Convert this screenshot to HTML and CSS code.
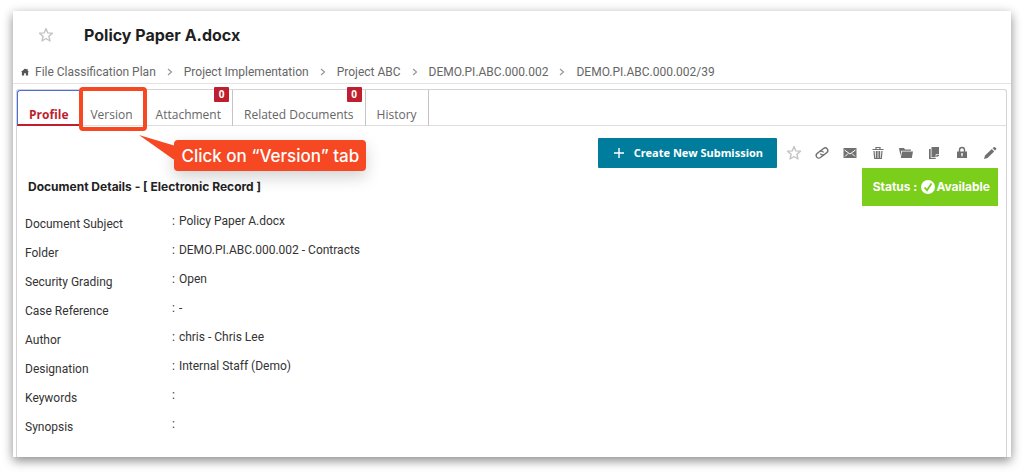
FILE: index.html
```html
<!DOCTYPE html>
<html lang="en">
<head>
<meta charset="utf-8">
<meta name="viewport" content="width=device-width, initial-scale=1">
<title>Policy Paper A.docx</title>
<link rel="stylesheet" href="styles.css">
</head>
<body>
<svg class="symbols" aria-hidden="true">
  <symbol id="star" viewBox="0 0 16 16"><path d="M8 1.600l1.800 4.300 4.700.4-3.600 3.100 1.100 4.600L8 11.500 4 14l1.100-4.600L1.500 6.300l4.700-.4z" fill="none" stroke="currentColor" stroke-width="1.400" stroke-linejoin="round"/></symbol>
  <symbol id="chevron" viewBox="0 0 8 8"><path d="M2 1l3.500 3L2 7" fill="none" stroke="currentColor" stroke-width="1.200"/></symbol>
</svg>
<main class="card">
  <header class="header">
    <div class="title-row">
      <button class="icon-button star" aria-label="Add to favourites"><svg class="icon-star"><use href="#star"/></svg></button>
      <h1 class="title">Policy Paper A.docx</h1>
    </div>
    <nav class="crumbs" aria-label="Breadcrumb">
      <a class="crumb" href="#"><svg class="home" viewBox="0 0 9 9" aria-hidden="true"><path d="M0 4.600L4.500.5 6 1.800V1h1.500v2.200L9 4.600H8V8.500H5.500V6h-2v2.500H1V4.600z" fill="#555"/></svg>File Classification Plan</a>
      <svg class="sep"><use href="#chevron"/></svg>
      <a class="crumb" href="#">Project Implementation</a>
      <svg class="sep"><use href="#chevron"/></svg>
      <a class="crumb" href="#">Project ABC</a>
      <svg class="sep"><use href="#chevron"/></svg>
      <a class="crumb" href="#">DEMO.PI.ABC.000.002</a>
      <svg class="sep"><use href="#chevron"/></svg>
      <a class="crumb" href="#">DEMO.PI.ABC.000.002/39</a>
    </nav>
  </header>
  <section class="panel">
    <div class="tabs" role="tablist">
      <button class="tab tab-active" role="tab" aria-selected="true">Profile</button>
      <div class="tab-target">
        <button class="tab" role="tab">Version</button>
        <div class="callout">
          <svg class="callout-tail" viewBox="0 0 40 28" aria-hidden="true"><path d="M0 0L40 12V27L34 24z" fill="#f54823"/></svg>
          <span class="callout-text">Click on “Version” tab</span>
        </div>
      </div>
      <button class="tab" role="tab">Attachment<span class="badge">0</span></button>
      <button class="tab" role="tab">Related Documents<span class="badge">0</span></button>
      <button class="tab" role="tab">History</button>
    </div>
    <div class="toolbar">
      <button class="create"><svg class="plus" viewBox="0 0 10 10" aria-hidden="true"><path d="M5 0v10M0 5h10" stroke="currentColor" stroke-width="1.400"/></svg>Create New Submission</button>
      <div class="actions">
        <button class="icon-button star" aria-label="Favourite"><svg class="icon-star"><use href="#star"/></svg></button>
        <button class="icon-button" aria-label="Copy link"><svg class="icon" viewBox="0 0 14 14"><g fill="none" stroke="currentColor" stroke-width="1.400" transform="rotate(-38 7 7)"><path d="M7.500 9.600H3a2.600 2.600 0 0 1 0-5.200h3a2.600 2.600 0 0 1 2.500 3.200"/><path d="M6.500 4.400H11a2.600 2.600 0 0 1 0 5.200H8a2.600 2.600 0 0 1-2.500-3.200"/></g></svg></button>
        <button class="icon-button" aria-label="Email"><svg class="icon" viewBox="0 0 14 14"><path d="M.5 2h13v10H.5z" fill="currentColor"/><path d="M1.500 4L7 8l5.500-4M2 10.500l3-3M12 10.500l-3-3" fill="none" stroke="#fff"/></svg></button>
        <button class="icon-button" aria-label="Delete"><svg class="icon" viewBox="0 0 14 14"><path d="M1.500 3.500h11M5 3V1.500h4V3M3 5l.7 7.500h6.600L11 5M5.400 5v7M7 5v7M8.600 5v7" fill="none" stroke="currentColor" stroke-width="1.200"/></svg></button>
        <button class="icon-button" aria-label="Move to folder"><svg class="icon" viewBox="0 0 14 14"><path d="M0 2h5l1 1.500h6v1.300H2.200L1.500 10zM3 5.600h11L12.800 12H1.800z" fill="currentColor"/></svg></button>
        <button class="icon-button" aria-label="Copy"><svg class="icon" viewBox="0 0 14 14"><path d="M4.500 1H12v9L9.500 11H4.500z" fill="currentColor"/><path d="M2 3h1.700v8.800h5V13H2z" fill="currentColor"/><path d="M9 11V8.500h3" fill="none" stroke="#fff" stroke-width=".7"/></svg></button>
        <button class="icon-button" aria-label="Lock"><svg class="icon" viewBox="0 0 14 14"><path d="M4.500 6V4a2.500 2.500 0 0 1 5 0v2" fill="none" stroke="currentColor" stroke-width="1.400"/><path d="M2 5.500h10v6.500H2z" fill="currentColor"/><path d="M7 7.200v3.300M6 8h2" stroke="#fff" stroke-width="1.100"/></svg></button>
        <button class="icon-button" aria-label="Edit"><svg class="icon" viewBox="0 0 14 14"><path d="M1 13l1-3.500L8.800 3l2.400 2.400L4.500 12zM9.600 2.200l1-1q.8-.6 1.600.2l.7.700q.8.800.1 1.600l-1 .9z" fill="currentColor"/></svg></button>
      </div>
    </div>
    <div class="summary">
      <h2 class="heading">Document Details - [ Electronic Record ]</h2>
      <div class="status"><span>Status :</span><span class="status-value"><svg class="check" viewBox="0 0 14 14" aria-hidden="true"><circle cx="7" cy="7" r="7" fill="#fff"/><path d="M3.500 7.500L6 10.200 10.500 3.500" fill="none" stroke="#7bce1a" stroke-width="1.800"/></svg>Available</span></div>
    </div>
    <dl class="details">
      <dt>Document Subject</dt><dd>Policy Paper A.docx</dd>
      <dt>Folder</dt><dd>DEMO.PI.ABC.000.002 - Contracts</dd>
      <dt>Security Grading</dt><dd>Open</dd>
      <dt>Case Reference</dt><dd>-</dd>
      <dt>Author</dt><dd>chris - Chris Lee</dd>
      <dt>Designation</dt><dd>Internal Staff (Demo)</dd>
      <dt>Keywords</dt><dd></dd>
      <dt>Synopsis</dt><dd></dd>
    </dl>
  </section>
</main>
</body>
</html>
```
FILE: styles.css
```css
* { box-sizing: border-box; }

body {
  margin: 0;
  padding: 11px 13px 18px;
  min-height: 100vh;
  display: flex;
  background: #fff;
  color: #333;
  font: 12px/16px Roboto, "Liberation Sans", sans-serif;
}

button {
  margin: 0;
  padding: 0;
  border: 0;
  background: none;
  color: inherit;
  font: inherit;
  cursor: pointer;
}

.symbols { position: absolute; width: 0; height: 0; }

.card {
  flex: 1;
  min-width: 0;
  display: flex;
  flex-direction: column;
  background: #fff;
  box-shadow: 0 4px 10px rgba(0, 0, 0, 0.42), 0 0 12px rgba(0, 0, 0, 0.06);
}

.header { border-bottom: 1px solid #e4e4e4; }

.title-row {
  display: flex;
  align-items: center;
  gap: 24px;
  height: 48px;
  padding-left: 19px;
}

.title { margin: 0; color: #1f1f1f; font: 700 16px/24px Inter, "Liberation Sans", sans-serif; }

.icon-button {
  display: grid;
  place-items: center;
  width: 28px;
  height: 28px;
  color: #707070;
}

.star { color: #c4c4c4; }
.icon-star { width: 16px; height: 16px; }
.icon { width: 14px; height: 14px; }

.crumbs {
  display: flex;
  align-items: center;
  gap: 10px;
  padding: 5px 8px 3px;
}

.crumb { display: flex; align-items: center; gap: 6px; color: #666; text-decoration: none; white-space: nowrap; }
.home { width: 8px; height: 8px; }
.sep { width: 8px; height: 8px; color: #999; }

.panel {
  flex: 1;
  margin: 5px 4px 0 3px;
  border: 1px solid #d4d4d4;
  border-bottom: 0;
  border-radius: 3px 3px 0 0;
}

.tabs { display: flex; height: 36px; border-bottom: 1px solid #dedede; }

.tab {
  position: relative;
  height: 36px;
  padding: 14px 11px 0;
  border-right: 1px solid #c4c4c4;
  color: #666;
  font: 12px/20px "Open Sans", "Noto Sans", sans-serif;
  white-space: nowrap;
}

.tab-active {
  border: 1px solid #4a6ee0;
  border-width: 1px 0 2px 1px;
  border-bottom-color: #be1e2d;
  border-radius: 3px 0 0 0;
  color: #be1e2d;
  font-weight: 700;
}

.tab-target { position: relative; }

.tab-target::before {
  content: "";
  position: absolute;
  z-index: 1;
  inset: -3px -2px -6px 0;
  border: 4px solid #f54823;
  border-radius: 4px;
  pointer-events: none;
}

.badge {
  position: absolute;
  top: -3px;
  right: 3px;
  width: 15px;
  height: 15px;
  border-radius: 1px;
  background: #be1e2d;
  color: #fff;
  font-size: 10px;
  line-height: 15px;
  font-weight: 700;
  text-align: center;
}

.callout {
  position: absolute;
  z-index: 2;
  top: 50px;
  left: 95px;
}

.callout-text {
  display: block;
  padding: 4px 7px 3px;
  border-radius: 4px;
  background: #f54823;
  box-shadow: 0 6px 16px rgba(0, 0, 0, 0.18);
  color: #fff;
  font: 500 17px/24px Inter, "Liberation Sans", sans-serif;
  white-space: nowrap;
}

.callout-tail { position: absolute; top: -5px; left: -35px; width: 40px; height: 28px; }

.toolbar {
  display: flex;
  justify-content: flex-end;
  align-items: center;
  gap: 3px;
  padding: 12px 2px 0 0;
}

.actions { display: flex; }

.create {
  display: flex;
  align-items: center;
  gap: 10px;
  height: 30px;
  padding: 0 14px 0 16px;
  border-radius: 1px;
  background: #007c9c;
  color: #fff;
  font: 700 11px/16px "Noto Sans", "Open Sans", sans-serif;
  white-space: nowrap;
}

.plus { width: 10px; height: 10px; }

.summary {
  display: flex;
  justify-content: space-between;
  align-items: center;
  padding: 0 8px 0 11px;
}

.heading { margin: 0; color: #222; font: 700 12px/16px Inter, "Liberation Sans", sans-serif; }

.status {
  display: flex;
  align-items: center;
  gap: 4px;
  height: 38px;
  padding: 0 8px 0 11px;
  background: #7bce1a;
  color: #fff;
  font: 700 12px/16px Inter, "Liberation Sans", sans-serif;
}

.status-value { display: flex; align-items: center; gap: 1px; }
.check { width: 14px; height: 14px; }

.details {
  display: grid;
  grid-template-columns: 147px 1fr;
  grid-auto-rows: 29px;
  margin: 7px 0 0;
  padding-left: 8px;
}

.details dt { padding-top: 3px; }
.details dd { margin: 0; display: flex; gap: 4px; }
.details dd::before { content: ":"; }
```
